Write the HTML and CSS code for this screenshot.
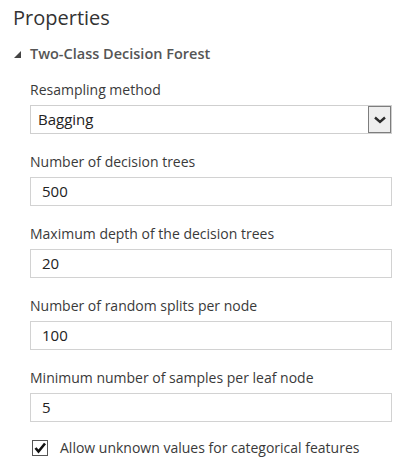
FILE: index.html
```html
<!DOCTYPE html>
<html>
<head>
<meta charset="utf-8">
<link rel="stylesheet" href="styles.css">
</head>
<body>
<div class="panel">
  <h1 class="title">Properties</h1>
  <div class="section">
    <div class="section-head">
      <svg class="caret" width="8" height="8" viewBox="0 0 8 8"><polygon points="7,0 7,7 0,7" fill="#444"/></svg>
      <span>Two-Class Decision Forest</span>
    </div>
    <div class="fields">
      <div class="field">
        <div class="label">Resampling method</div>
        <div class="select">
          <span class="select-value">Bagging</span>
          <span class="select-btn">
            <svg width="12" height="8" viewBox="0 0 12 8"><polyline points="1,1.5 6,6 11,1.5" fill="none" stroke="#2b2b2b" stroke-width="2.4"/></svg>
          </span>
        </div>
      </div>
      <div class="field">
        <div class="label">Number of decision trees</div>
        <div class="input">500</div>
      </div>
      <div class="field">
        <div class="label">Maximum depth of the decision trees</div>
        <div class="input">20</div>
      </div>
      <div class="field">
        <div class="label">Number of random splits per node</div>
        <div class="input">100</div>
      </div>
      <div class="field">
        <div class="label">Minimum number of samples per leaf node</div>
        <div class="input">5</div>
      </div>
      <div class="check-row">
        <span class="checkbox">
          <svg width="14" height="14" viewBox="0 0 14 14"><polyline points="2.5,7 5.5,10.5 12,2.5" fill="none" stroke="#111" stroke-width="2.6"/></svg>
        </span>
        <span class="check-label">Allow unknown values for categorical features</span>
      </div>
    </div>
  </div>
</div>
</body>
</html>
```

FILE: styles.css
```css
html, body {
  margin: 0;
  padding: 0;
  background: #ffffff;
}
body {
  font-family: "Open Sans", "Noto Sans", sans-serif;
  color: #333;
  width: 400px;
  height: 460px;
  overflow: hidden;
}
.panel {
  padding: 4px 8px 0 13px;
}
.title {
  margin: 0;
  font-size: 20px;
  font-weight: 400;
  line-height: 28px;
  color: #333;
}
.section-head {
  margin-top: 11px;
  display: flex;
  align-items: center;
  height: 20px;
  font-size: 14.5px;
  font-weight: 600;
  color: #555;
}
.caret {
  margin-left: 1px;
  margin-right: 8px;
  margin-top: 3px;
}
.fields {
  margin-left: 17px;
  margin-top: 17px;
  display: flex;
  flex-direction: column;
  gap: 18px;
}
.field {
  display: flex;
  flex-direction: column;
  gap: 5px;
}
.label {
  font-size: 14px;
  line-height: 20px;
  color: #3a3a3a;
}
.select {
  display: flex;
  height: 29px;
  box-sizing: border-box;
  border: 1px solid #cfcfcf;
  background: #fff;
}
.select-value {
  flex: 1;
  padding-left: 7px;
  font-size: 15px;
  line-height: 27px;
  color: #222;
}
.select-btn {
  width: 23px;
  box-sizing: border-box;
  border: 1px solid #7d7d7d;
  background: #eeeeee;
  display: flex;
  align-items: center;
  justify-content: center;
}
.input {
  height: 29px;
  box-sizing: border-box;
  border: 1px solid #d2d2d2;
  padding-left: 11px;
  font-size: 15px;
  line-height: 27px;
  color: #222;
}
.check-row {
  display: flex;
  align-items: center;
  height: 16px;
}
.checkbox {
  width: 16px;
  height: 16px;
  box-sizing: border-box;
  border: 1px solid #555;
  background: #fff;
  margin-left: 2px;
  display: flex;
  align-items: center;
  justify-content: center;
}
.check-label {
  margin-left: 12px;
  font-size: 14px;
  line-height: 16px;
  color: #3a3a3a;
}
```
